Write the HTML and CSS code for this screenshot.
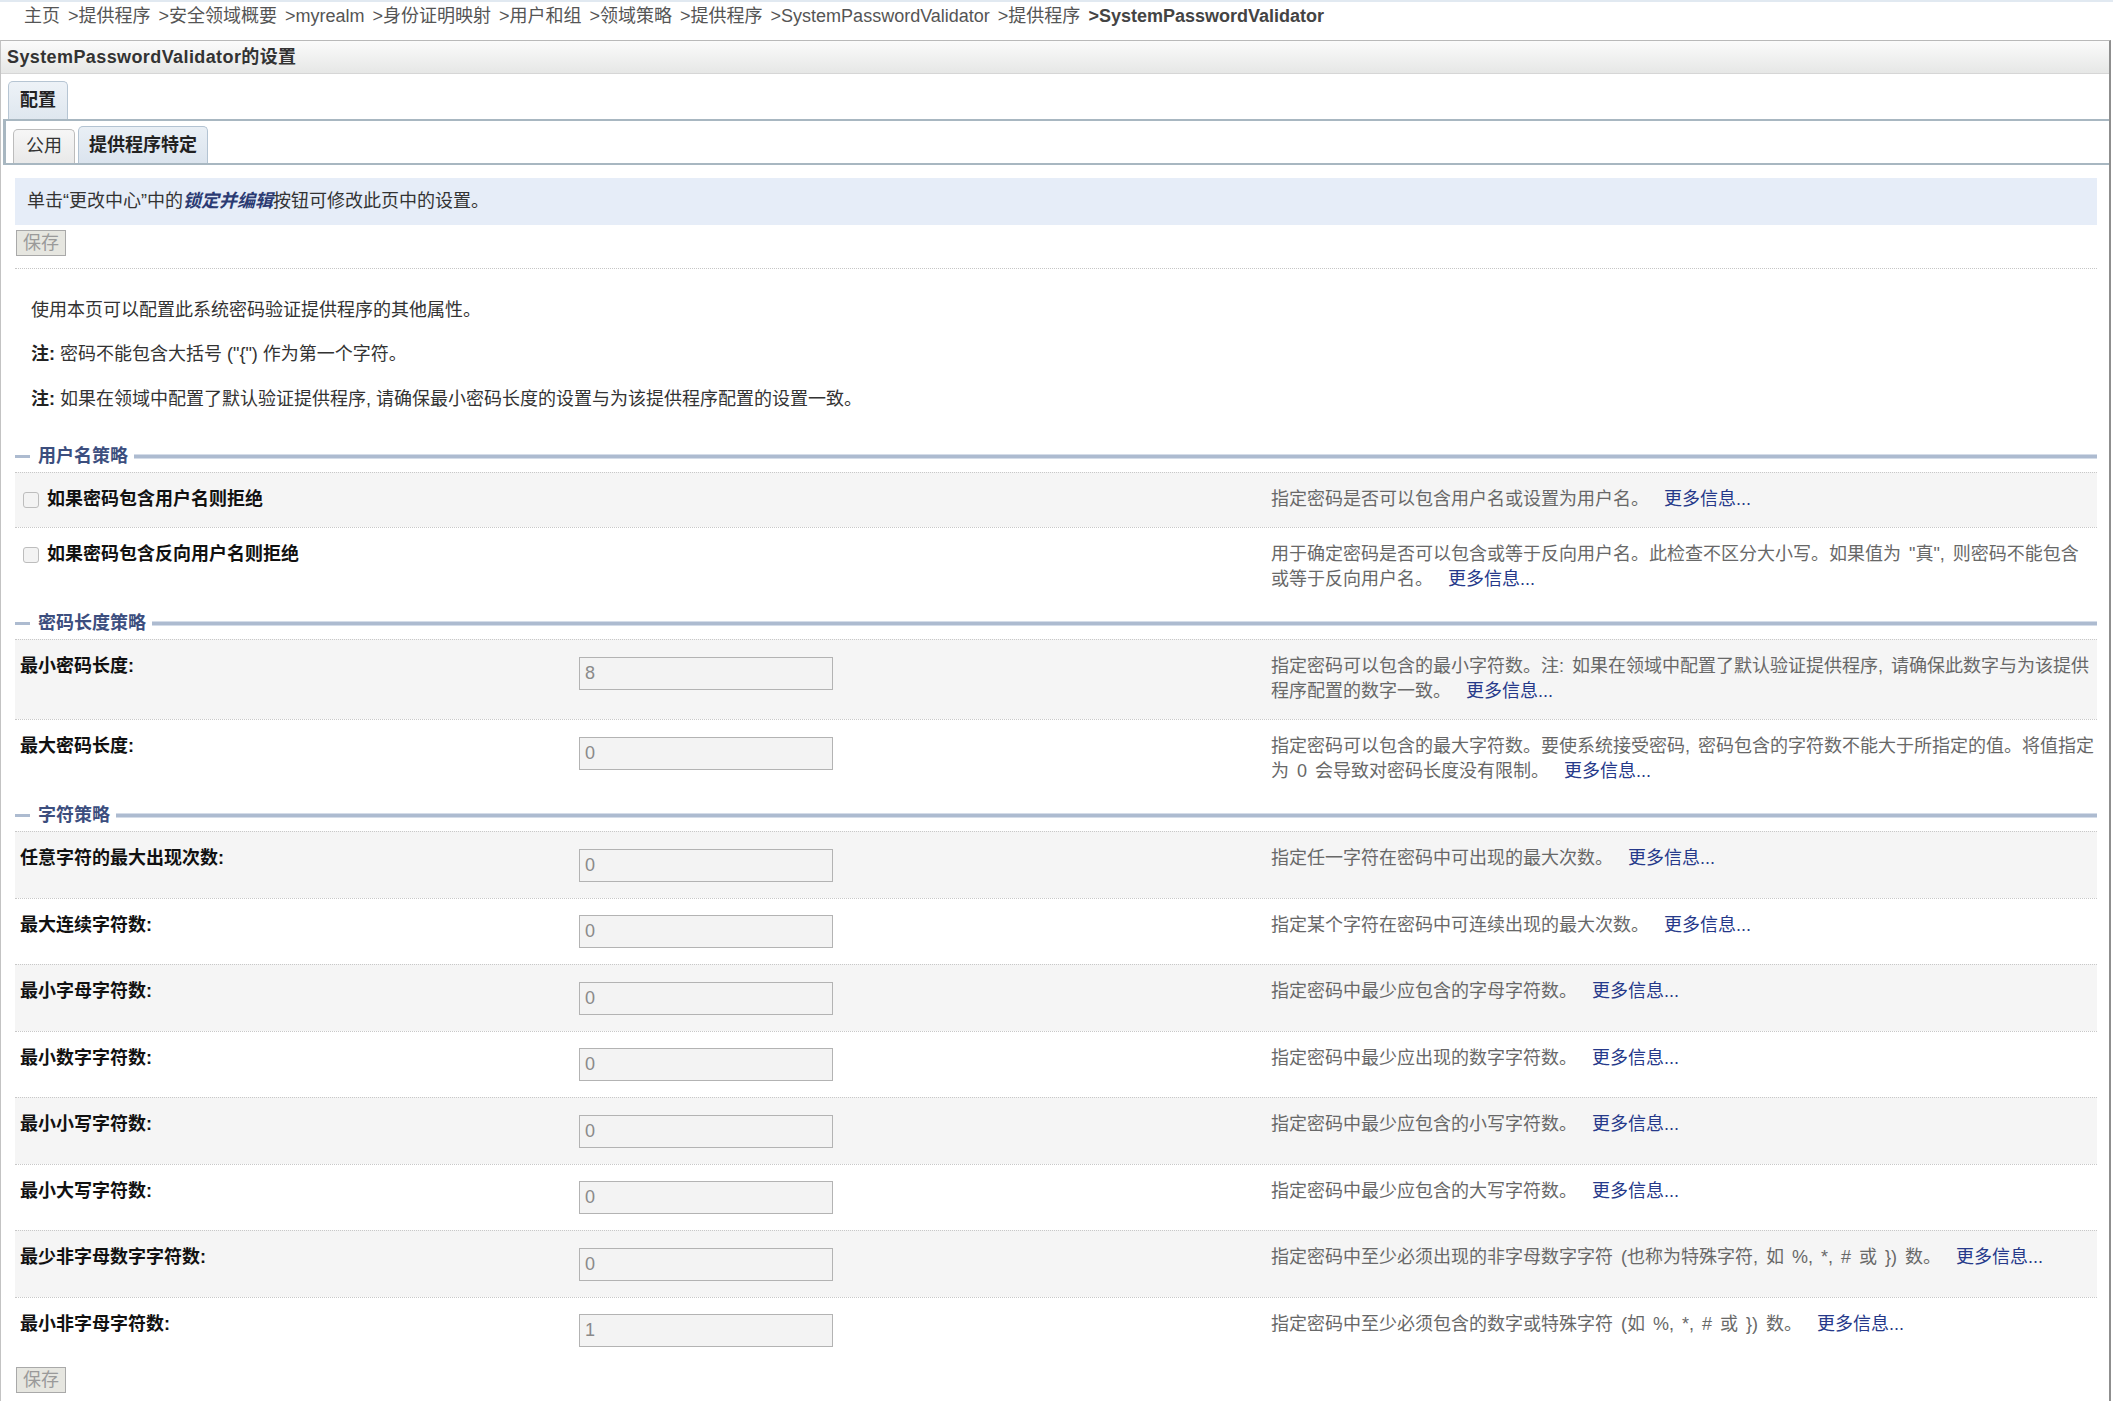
FILE: index.html
```html
<!DOCTYPE html>
<html lang="zh-CN">
<head>
<meta charset="utf-8">
<title>SystemPasswordValidator的设置</title>
<link rel="stylesheet" href="styles.css">
</head>
<body>
<div class="crumbs">主页 &gt;提供程序 &gt;安全领域概要 &gt;myrealm &gt;身份证明映射 &gt;用户和组 &gt;领域策略 &gt;提供程序 &gt;SystemPasswordValidator &gt;提供程序 <b class="crumb-cur">&gt;SystemPasswordValidator</b></div>

<div class="panel">
  <div class="panel-title">SystemPasswordValidator的设置</div>

  <div class="tabs-top">
    <div class="tab-top">配置</div>
  </div>
  <div class="tabs-sub">
    <div class="tab-sub">公用</div>
    <div class="tab-sub tab-sub-active">提供程序特定</div>
  </div>

  <div class="content">
    <div class="info">单击“更改中心”中的<b class="lock">锁定并编辑</b>按钮可修改此页中的设置。</div>
    <button class="btn" disabled>保存</button>
    <div class="dotted"></div>

    <div class="intro">
      <p class="intro-first">使用本页可以配置此系统密码验证提供程序的其他属性。</p>
      <p><b>注:</b> 密码不能包含大括号 ("{") 作为第一个字符。</p>
      <p><b>注:</b> 如果在领域中配置了默认验证提供程序, 请确保最小密码长度的设置与为该提供程序配置的设置一致。</p>
    </div>

    <div class="legend"><span class="legend-dash"></span><span class="legend-text">用户名策略</span><span class="legend-line"></span></div>
    <div class="row alt">
      <div class="c1"><div class="chk"><span class="box"></span><b>如果密码包含用户名则拒绝</b></div></div>
      <div class="c2 empty"></div>
      <div class="c3">指定密码是否可以包含用户名或设置为用户名。<a class="more" href="#">更多信息...</a></div>
    </div>
    <div class="row">
      <div class="c1"><div class="chk"><span class="box"></span><b>如果密码包含反向用户名则拒绝</b></div></div>
      <div class="c2 empty"></div>
      <div class="c3">用于确定密码是否可以包含或等于反向用户名。此检查不区分大小写。如果值为 "真", 则密码不能包含或等于反向用户名。<a class="more" href="#">更多信息...</a></div>
    </div>

    <div class="legend"><span class="legend-dash"></span><span class="legend-text">密码长度策略</span><span class="legend-line"></span></div>
    <div class="row alt">
      <div class="c1"><b>最小密码长度:</b></div>
      <div class="c2"><input class="field" type="text" value="8" readonly></div>
      <div class="c3">指定密码可以包含的最小字符数。注: 如果在领域中配置了默认验证提供程序, 请确保此数字与为该提供程序配置的数字一致。<a class="more" href="#">更多信息...</a></div>
    </div>
    <div class="row">
      <div class="c1"><b>最大密码长度:</b></div>
      <div class="c2"><input class="field" type="text" value="0" readonly></div>
      <div class="c3">指定密码可以包含的最大字符数。要使系统接受密码, 密码包含的字符数不能大于所指定的值。将值指定为 0 会导致对密码长度没有限制。<a class="more" href="#">更多信息...</a></div>
    </div>

    <div class="legend"><span class="legend-dash"></span><span class="legend-text">字符策略</span><span class="legend-line"></span></div>
    <div class="row alt">
      <div class="c1"><b>任意字符的最大出现次数:</b></div>
      <div class="c2"><input class="field" type="text" value="0" readonly></div>
      <div class="c3">指定任一字符在密码中可出现的最大次数。<a class="more" href="#">更多信息...</a></div>
    </div>
    <div class="row">
      <div class="c1"><b>最大连续字符数:</b></div>
      <div class="c2"><input class="field" type="text" value="0" readonly></div>
      <div class="c3">指定某个字符在密码中可连续出现的最大次数。<a class="more" href="#">更多信息...</a></div>
    </div>
    <div class="row alt">
      <div class="c1"><b>最小字母字符数:</b></div>
      <div class="c2"><input class="field" type="text" value="0" readonly></div>
      <div class="c3">指定密码中最少应包含的字母字符数。<a class="more" href="#">更多信息...</a></div>
    </div>
    <div class="row">
      <div class="c1"><b>最小数字字符数:</b></div>
      <div class="c2"><input class="field" type="text" value="0" readonly></div>
      <div class="c3">指定密码中最少应出现的数字字符数。<a class="more" href="#">更多信息...</a></div>
    </div>
    <div class="row alt">
      <div class="c1"><b>最小小写字符数:</b></div>
      <div class="c2"><input class="field" type="text" value="0" readonly></div>
      <div class="c3">指定密码中最少应包含的小写字符数。<a class="more" href="#">更多信息...</a></div>
    </div>
    <div class="row">
      <div class="c1"><b>最小大写字符数:</b></div>
      <div class="c2"><input class="field" type="text" value="0" readonly></div>
      <div class="c3">指定密码中最少应包含的大写字符数。<a class="more" href="#">更多信息...</a></div>
    </div>
    <div class="row alt">
      <div class="c1"><b>最少非字母数字字符数:</b></div>
      <div class="c2"><input class="field" type="text" value="0" readonly></div>
      <div class="c3">指定密码中至少必须出现的非字母数字字符 (也称为特殊字符, 如 %, *, # 或 }) 数。<a class="more" href="#">更多信息...</a></div>
    </div>
    <div class="row">
      <div class="c1"><b>最小非字母字符数:</b></div>
      <div class="c2"><input class="field" type="text" value="1" readonly></div>
      <div class="c3">指定密码中至少必须包含的数字或特殊字符 (如 %, *, # 或 }) 数。<a class="more" href="#">更多信息...</a></div>
    </div>

    <button class="btn btn-bottom" disabled>保存</button>
  </div>
</div>
</body>
</html>
```

FILE: styles.css
```css
html, body {
  margin: 0;
  padding: 0;
  background: #ffffff;
}

body {
  font-family: "Liberation Sans", "Noto Sans CJK SC", sans-serif;
  font-size: 18px;
  line-height: 25px;
  color: #333333;
  border-top: 2px solid #e1e9f1;
}

.crumbs {
  height: 38px;
  box-sizing: border-box;
  padding: 2px 0 0 24px;
  color: #555555;
  white-space: nowrap;
  word-spacing: 3px;
}

.crumb-cur {
  color: #444444;
}

.panel {
  margin-right: 2px;
  border-top: 1px solid #b9b9b9;
  border-left: 1px solid #c3c3c3;
  border-right: 2px solid #8f8f8f;
  min-height: 1400px;
}

.panel-title {
  height: 33px;
  box-sizing: border-box;
  padding-left: 6px;
  line-height: 32px;
  font-weight: bold;
  letter-spacing: 0.4px;
  color: #333333;
  background: linear-gradient(#fbfbfb, #e6e7e6);
  border-bottom: 1px solid #d6d6d6;
}

.tabs-top {
  display: flex;
  padding: 7px 0 0 7px;
}

.tab-top {
  height: 38px;
  box-sizing: border-box;
  padding: 0 11px;
  line-height: 37px;
  font-weight: bold;
  color: #222222;
  border: 1px solid #b6c5d3;
  border-bottom: 0;
  border-radius: 5px 5px 0 0;
  background: linear-gradient(#edf2f7, #dfe7ef);
}

.tabs-sub {
  display: flex;
  align-items: flex-end;
  gap: 3px;
  height: 46px;
  box-sizing: border-box;
  margin-left: 2px;
  padding-left: 7px;
  border-top: 2px solid #a8b7c1;
  border-left: 3px solid #a8b7c1;
  border-bottom: 2px solid #a8b7c1;
}

.tab-sub {
  height: 34px;
  box-sizing: border-box;
  padding: 0 12px;
  line-height: 33px;
  color: #333333;
  border: 1px solid #bcbcbc;
  border-bottom: 0;
  border-radius: 5px 5px 0 0;
  background: linear-gradient(#f6f6f6, #e9e9e9);
}

.tab-sub-active {
  height: 37px;
  line-height: 36px;
  padding: 0 10px;
  font-weight: bold;
  color: #222222;
  border-color: #b3c3d2;
  background: linear-gradient(#e9eff5, #dbe4ee);
}

.content {
  padding: 0 12px 0 14px;
}

.info {
  margin-top: 13px;
  padding: 11px 12px;
  background: #e6edf8;
  color: #333333;
}

.lock {
  font-style: italic;
  color: #2b3b73;
}

.btn {
  display: block;
  margin: 5px 0 0 1px;
  height: 26px;
  box-sizing: border-box;
  padding: 0 6px;
  font-family: "Liberation Sans", "Noto Sans CJK SC", sans-serif;
  font-size: 18px;
  line-height: 24px;
  color: #9a9a9a;
  background: #e6e6e0;
  border: 1px solid #a9a9a9;
  border-radius: 0;
}

.btn-bottom {
  margin-top: 4px;
}

.dotted {
  margin-top: 12px;
  border-top: 1px dotted #c6c6c6;
}

.intro {
  padding-left: 16px;
}

.intro p {
  margin: 19.5px 0 0;
}

.intro .intro-first {
  margin-top: 28.5px;
}

.intro b {
  color: #222222;
}

.legend {
  display: flex;
  align-items: center;
  height: 32px;
}

.intro + .legend {
  margin-top: 28.5px;
}

.legend-dash {
  width: 15px;
  height: 3px;
  background: #adbbd0;
}

.legend-text {
  margin: 0 6px 0 8px;
  font-weight: bold;
  color: #3c4e7e;
}

.legend-line {
  flex: 1;
  height: 3px;
  background: #adbbd0;
  box-shadow: 0 -1px 0 #d4dce8, 0 1px 0 #d4dce8;
}

.row {
  display: grid;
  grid-template-columns: 557px 691px 1fr;
  border-top: 1px dotted #c8c8c8;
}

.row.alt {
  background: #f5f5f5;
}

.c1 {
  padding: 14px 5px 15px;
  color: #111111;
}

.c2 {
  padding: 16.5px 7px 16px;
}

.c2.empty {
  padding: 0;
}

.c3 {
  padding: 14px 1.6px 15px 8px;
  color: #686868;
  word-spacing: 3px;
}

.chk {
  display: flex;
  align-items: center;
  gap: 8px;
  margin-left: 3px;
}

.box {
  width: 16px;
  height: 16px;
  box-sizing: border-box;
  border: 1px solid #bdbdbd;
  border-radius: 3px;
  background: #f3f3f3;
}

.field {
  display: block;
  width: 254px;
  height: 33px;
  box-sizing: border-box;
  margin: 0;
  padding: 0 5px;
  font-family: "Liberation Sans", "Noto Sans CJK SC", sans-serif;
  font-size: 18px;
  color: #8a8a8a;
  background: #f3f3f3;
  border: 1px solid #b3b3b3;
  border-radius: 0;
  outline: none;
}

.more {
  margin-left: 15px;
  color: #26398a;
  text-decoration: none;
  word-spacing: 0;
}
```
